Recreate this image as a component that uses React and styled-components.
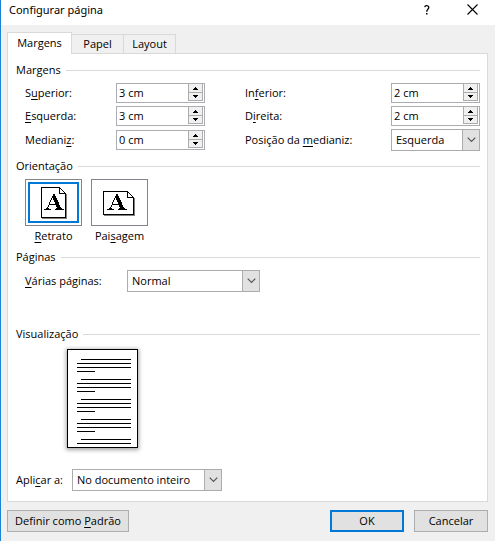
import React, { useState } from "react";
import styled, { createGlobalStyle } from "styled-components";

const GlobalStyle = createGlobalStyle`
  *, *::before, *::after { box-sizing: border-box; }
  body { margin: 0; background: #f0f0f0; }
  body, button, input, select {
    font-family: "Open Sans", "Noto Sans", sans-serif;
    font-size: 11px;
    line-height: 16px;
    color: #000;
  }
  u { text-underline-offset: 2px; text-decoration-thickness: 1px; text-decoration-skip-ink: none; }
`;

const Dialog = styled.form`
  background: #f0f0f0;
  border-left: 1px solid #1883d7;
  border-bottom: 1px solid #1883d7;
`;

const TitleBar = styled.header`
  display: flex;
  align-items: center;
  height: 25px;
  padding: 0 11px 6px 8px;
  background: #fff;
`;

const Title = styled.h1`
  flex: 1;
  margin: 0;
  font-family: "Noto Sans", "Open Sans", sans-serif;
  font-size: 11px;
  line-height: 18px;
  font-weight: 400;
`;

const TitleButton = styled.button`
  display: flex;
  align-items: center;
  justify-content: center;
  width: 24px;
  height: 18px;
  margin-left: 21px;
  padding: 0;
  border: 0;
  background: none;
`;

const Content = styled.div`
  padding: 7px 7px 9px 6px;
`;

const TabList = styled.div`
  display: flex;
  align-items: flex-end;
`;

const Tab = styled.button`
  position: relative;
  height: ${(p) => (p.$active ? 22 : 19)}px;
  width: ${(p) => p.$width}px;
  margin: 0 0 ${(p) => (p.$active ? -1 : 0)}px ${(p) => (p.$joined ? -1 : 0)}px;
  padding: 0 0 ${(p) => (p.$active ? 1 : 0)}px;
  border: 1px solid #d9d9d9;
  border-bottom: 0;
  background: ${(p) => (p.$active ? "#fff" : "#f0f0f0")};
  z-index: ${(p) => (p.$active ? 1 : 0)};
`;

const Panel = styled.div`
  padding: 8px 7px 10px 8px;
  border: 1px solid #d9d9d9;
  background: #fff;
`;

const Section = styled.section`
  padding-bottom: ${(p) => p.$space || 0}px;
`;

const Heading = styled.h2`
  display: flex;
  align-items: center;
  gap: 5px;
  height: 16px;
  margin: 0;
  font-size: 11px;
  font-weight: 400;

  &::after {
    content: "";
    flex: 1;
    height: 1px;
    background: #d9d9d9;
  }
`;

const Columns = styled.div`
  display: flex;
  justify-content: space-between;
  padding: 5px 0 0 9px;
`;

const FieldGrid = styled.div`
  display: grid;
  grid-template-columns: ${(p) => p.$label}px 89px;
  grid-template-rows: 20px 20px 22px;
  row-gap: 3px;
  align-items: center;
`;

const Label = styled.label`
  white-space: nowrap;
`;

const SpinBox = styled.div`
  display: flex;
  height: 20px;
  padding-right: 1px;
  border: 1px solid #abadb3;
  background: #fff;
`;

const SpinInput = styled.input`
  flex: 1;
  min-width: 0;
  padding: 0 2px;
  border: 0;
  outline: 0;
  background: none;
`;

const SpinButtons = styled.div`
  display: grid;
  grid-template-rows: 8px 9px;
  width: 15px;
`;

const SpinButton = styled.button`
  display: flex;
  align-items: center;
  justify-content: center;
  padding: 0;
  border: 1px solid #acacac;
  border-top-width: ${(p) => (p.$up ? 0 : 1)}px;
  border-bottom-width: ${(p) => (p.$up ? 0 : 1)}px;
  background: #f0f0f0;
`;

const SelectBox = styled.div`
  display: grid;
  grid-template-columns: 1fr 18px;
  width: ${(p) => p.$width};
  height: 22px;
`;

const Select = styled.select`
  grid-area: 1 / 1 / 2 / 3;
  width: 100%;
  padding: 0 18px 0 4px;
  appearance: none;
  border: 1px solid #acacac;
  border-radius: 0;
  background: #fff;
`;

const SelectArrow = styled.span`
  grid-area: 1 / 2;
  display: flex;
  align-items: center;
  justify-content: center;
  border: 1px solid #acacac;
  background: #e1e1e1;
  pointer-events: none;
`;

const Orientations = styled.div`
  display: flex;
  gap: 9px;
  padding: 5px 0 0 9px;
`;

const Orientation = styled.label`
  display: flex;
  flex-direction: column;
  align-items: center;
  gap: 2px;
`;

const HiddenRadio = styled.input`
  position: absolute;
  opacity: 0;
  pointer-events: none;
`;

const OrientationFrame = styled.span`
  display: block;
  width: 57px;
  height: 47px;
  padding: 2px;
  border: 1px solid #83838b;
`;

const OrientationInner = styled.span`
  display: flex;
  align-items: center;
  justify-content: center;
  height: 100%;
  border: 2px solid ${(p) => (p.$selected ? "#0078d7" : "transparent")};
`;

const InlineField = styled.div`
  display: flex;
  align-items: center;
  padding: ${(p) => p.$pad};
`;

const InlineLabel = styled(Label)`
  width: ${(p) => p.$width}px;
`;

const Preview = styled.div`
  width: 71px;
  height: 99px;
  margin: 7px 0 21px 51px;
  border: 1px solid #000;
  background: #fff;
  box-shadow: 0 1px 4px 1px rgba(0, 0, 0, 0.35);
`;

const Footer = styled.footer`
  display: flex;
  gap: 10px;
  padding-top: 8px;
`;

const Button = styled.button`
  width: ${(p) => p.$width || 74}px;
  height: 22px;
  margin-right: ${(p) => (p.$apart ? "auto" : 0)};
  padding: 0;
  border: ${(p) => (p.$primary ? "2px solid #0078d7" : "1px solid #adadad")};
  background: #e1e1e1;
`;

const Arrow = ({ up }) => (
  <svg width="5" height="3" viewBox="0 0 5 3" shapeRendering="crispEdges" aria-hidden="true">
    <path d={up ? "M2 0h1v1h1v1h1v1H0V2h1V1h1z" : "M0 0h5v1H4v1H3v1H2V2H1V1H0z"} />
  </svg>
);

const Chevron = () => (
  <svg width="9" height="6" viewBox="0 0 9 6" aria-hidden="true">
    <path d="M.7.7 4.5 4.5 8.3.7" fill="none" stroke="#555" strokeWidth="1.2" />
  </svg>
);

/* Pixel-stepped serif A as runs of [row, start, end]. */
const LETTER_RUNS = [
  [0, 9, 11], [1, 9, 11], [2, 8, 12], [3, 8, 12],
  [4, 7, 8], [4, 9, 13], [5, 7, 8], [5, 9, 13],
  [6, 6, 7], [6, 10, 14], [7, 6, 7], [7, 10, 14],
  [8, 5, 6], [8, 11, 15], [9, 5, 6], [9, 11, 15], [10, 5, 15],
  [11, 4, 5], [11, 12, 16], [12, 4, 5], [12, 12, 16],
  [13, 3, 4], [13, 13, 17], [14, 2, 5], [14, 12, 18],
  [15, 0, 7], [15, 11, 20],
];
const LETTER = LETTER_RUNS.map(([y, a, b]) => `M${a} ${y}h${b - a}v1h${a - b}z`).join("");

const PortraitIcon = () => (
  <svg width="27" height="33" viewBox="-1 -1 27 33" shapeRendering="crispEdges" aria-hidden="true">
    <path d="M1 31h24V7h1v25H1z" fill="#808080" />
    <path d="M.5.5H18.500L24.500 6.500V30.500H.5z" fill="#fff" stroke="#000" />
    <path d="M18.500.5v6h6" fill="none" stroke="#000" />
    <path d={LETTER} transform="translate(3 7)" />
  </svg>
);

const LandscapeIcon = () => (
  <svg width="33" height="27" viewBox="0 -2 33 27" shapeRendering="crispEdges" aria-hidden="true">
    <path d="M1 24h30V7h1v18H1z" fill="#808080" />
    <path d="M.5.5H24.500L30.500 6.500V23.500H.5z" fill="#fff" stroke="#000" />
    <path d="M24.500.5v6h6" fill="none" stroke="#000" />
    <path d={LETTER} transform="translate(4 3)" />
  </svg>
);

const PAGE_LINES = [0, 1, 2, 3, 4].flatMap((n) => {
  const y = 9 + n * 20;
  return [
    [13, y, 50],
    [9, y + 4, 54],
    [9, y + 8, 54],
    [9, y + 12, 18],
  ].filter(([, top]) => top < 97);
});

const PagePreview = () => (
  <Preview role="img" aria-label="Visualização da página">
    <svg width="69" height="97" viewBox="0 0 69 97" shapeRendering="crispEdges" display="block">
      {PAGE_LINES.map(([x, y, w]) => (
        <rect key={y} x={x} y={y} width={w} height="1" />
      ))}
    </svg>
  </Preview>
);

function SpinField({ id, label, initial }) {
  const [value, setValue] = useState(`${initial} cm`);
  const step = (d) => setValue(`${Math.max(0, (parseFloat(value) || 0) + d)} cm`);
  return (
    <>
      <Label htmlFor={id}>{label}</Label>
      <SpinBox>
        <SpinInput id={id} value={value} onChange={(e) => setValue(e.target.value)} />
        <SpinButtons>
          <SpinButton type="button" $up aria-label="Aumentar" onClick={() => step(1)}>
            <Arrow up />
          </SpinButton>
          <SpinButton type="button" aria-label="Diminuir" onClick={() => step(-1)}>
            <Arrow />
          </SpinButton>
        </SpinButtons>
      </SpinBox>
    </>
  );
}

const SelectField = ({ id, options, width = "100%" }) => (
  <SelectBox $width={width}>
    <Select id={id}>
      {options.map((o) => (
        <option key={o}>{o}</option>
      ))}
    </Select>
    <SelectArrow>
      <Chevron />
    </SelectArrow>
  </SelectBox>
);

const TABS = [
  ["Margens", 65],
  ["Papel", 53],
  ["Layout", 53],
];

export default function App() {
  const [orientation, setOrientation] = useState("retrato");
  const choose = (e) => setOrientation(e.target.value);
  return (
    <Dialog onSubmit={(e) => e.preventDefault()}>
      <GlobalStyle />
      <TitleBar>
        <Title>Configurar página</Title>
        <TitleButton type="button" aria-label="Ajuda">
          <svg width="6" height="10" viewBox="0 0 6 10" aria-hidden="true">
            <path d="M.7 2.200C.9 1 1.700.7 2.700.7c1.300 0 2.100.7 2.100 1.800C4.800 4.200 2.700 4.300 2.700 6.700" fill="none" stroke="#000" strokeWidth="1.300" />
            <path d="M2 8h1.500v1.500H2z" />
          </svg>
        </TitleButton>
        <TitleButton type="button" aria-label="Fechar">
          <svg width="11" height="11" viewBox="0 0 11 11" aria-hidden="true">
            <path d="M.5.5l10 10M10.500.5l-10 10" stroke="#000" strokeWidth="1.100" />
          </svg>
        </TitleButton>
      </TitleBar>
      <Content>
        <TabList role="tablist">
          {TABS.map(([name, width], i) => (
            <Tab key={name} type="button" role="tab" aria-selected={i === 0} $active={i === 0} $joined={i > 0} $width={width}>
              {name}
            </Tab>
          ))}
        </TabList>
        <Panel role="tabpanel">
          <Section $space={7}>
            <Heading>Margens</Heading>
            <Columns>
              <FieldGrid $label={91}>
                <SpinField id="superior" label={<>S<u>u</u>perior:</>} initial={3} />
                <SpinField id="esquerda" label={<><u>E</u>squerda:</>} initial={3} />
                <SpinField id="medianiz" label={<>Mediani<u>z</u>:</>} initial={0} />
              </FieldGrid>
              <FieldGrid $label={146}>
                <SpinField id="inferior" label={<>In<u>f</u>erior:</>} initial={2} />
                <SpinField id="direita" label={<>D<u>i</u>reita:</>} initial={2} />
                <Label htmlFor="posicao">Posição da <u>m</u>edianiz:</Label>
                <SelectField id="posicao" options={["Esquerda", "Superior"]} />
              </FieldGrid>
            </Columns>
          </Section>
          <Section $space={5}>
            <Heading>Orientação</Heading>
            <Orientations role="radiogroup" aria-label="Orientação">
              <Orientation>
                <HiddenRadio type="radio" name="orientacao" value="retrato" checked={orientation === "retrato"} onChange={choose} />
                <OrientationFrame>
                  <OrientationInner $selected={orientation === "retrato"}>
                    <PortraitIcon />
                  </OrientationInner>
                </OrientationFrame>
                <span><u>R</u>etrato</span>
              </Orientation>
              <Orientation>
                <HiddenRadio type="radio" name="orientacao" value="paisagem" checked={orientation === "paisagem"} onChange={choose} />
                <OrientationFrame>
                  <OrientationInner $selected={orientation === "paisagem"}>
                    <LandscapeIcon />
                  </OrientationInner>
                </OrientationFrame>
                <span>Pai<u>s</u>agem</span>
              </Orientation>
            </Orientations>
          </Section>
          <Section $space={34}>
            <Heading>Páginas</Heading>
            <InlineField $pad="5px 0 0 9px">
              <InlineLabel $width={102} htmlFor="paginas"><u>V</u>árias páginas:</InlineLabel>
              <SelectField id="paginas" width="133px" options={["Normal", "Margens espelho", "2 páginas por folha", "Livro"]} />
            </InlineField>
          </Section>
          <Section>
            <Heading>Visualização</Heading>
            <PagePreview />
            <InlineField $pad="0">
              <InlineLabel $width={56} htmlFor="aplicar">Apli<u>c</u>ar a:</InlineLabel>
              <SelectField id="aplicar" width="150px" options={["No documento inteiro", "Deste ponto em diante"]} />
            </InlineField>
          </Section>
        </Panel>
        <Footer>
          <Button type="button" $width={122} $apart>Definir como <u>P</u>adrão</Button>
          <Button type="submit" $primary>OK</Button>
          <Button type="button">Cancelar</Button>
        </Footer>
      </Content>
    </Dialog>
  );
}
